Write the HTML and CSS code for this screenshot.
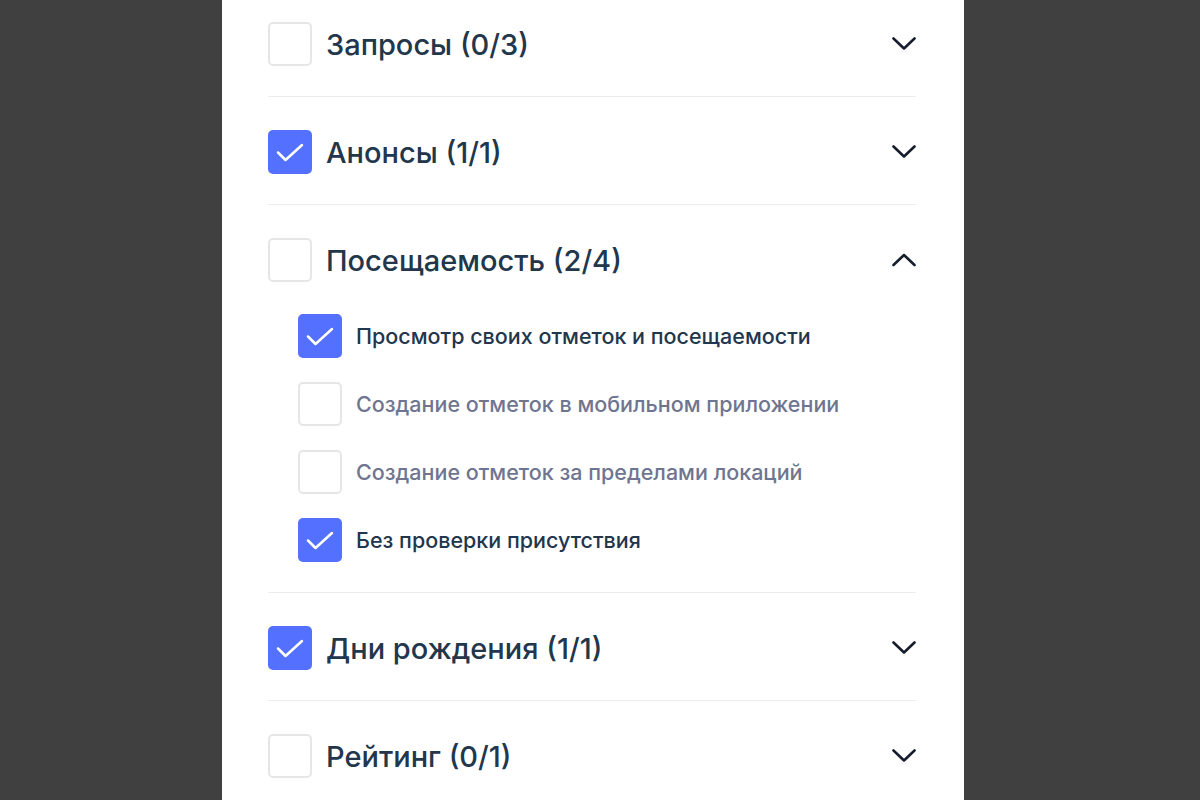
FILE: index.html
```html
<html>
    <head>
        <meta charset="utf-8">
        <link rel="stylesheet" href="styles.css">
    </head>
    <body>
        <div class="panel">

            <!-- Запросы -->
            <div class="section">
                <div class="row">
                    <span class="box"></span>
                    <span class="title">Запросы (0/3)</span>
                    <svg class="chev" width="24" height="24" viewBox="0 0 24 24"><path d="M1.5 6.5 L12 16.5 L22.5 6.5"/></svg>
                </div>
            </div>

            <!-- Анонсы -->
            <div class="section">
                <div class="row">
                    <span class="box on"><svg width="44" height="44" viewBox="0 0 44 44"><path d="M10 22.5 L17.5 30 L34 15"/></svg></span>
                    <span class="title">Анонсы (1/1)</span>
                    <svg class="chev" width="24" height="24" viewBox="0 0 24 24"><path d="M1.5 6.5 L12 16.5 L22.5 6.5"/></svg>
                </div>
            </div>

            <!-- Посещаемость -->
            <div class="section">
                <div class="row">
                    <span class="box"></span>
                    <span class="title">Посещаемость (2/4)</span>
                    <svg class="chev" width="24" height="24" viewBox="0 0 24 24"><path d="M1.5 17 L12 7 L22.5 17"/></svg>
                </div>
                <div class="items">
                    <div class="item">
                        <span class="box on"><svg width="44" height="44" viewBox="0 0 44 44"><path d="M10 22.5 L17.5 30 L34 15"/></svg></span>
                        <span class="label">Просмотр своих отметок и посещаемости</span>
                    </div>
                    <div class="item off">
                        <span class="box"></span>
                        <span class="label">Создание отметок в мобильном приложении</span>
                    </div>
                    <div class="item off">
                        <span class="box"></span>
                        <span class="label">Создание отметок за пределами локаций</span>
                    </div>
                    <div class="item">
                        <span class="box on"><svg width="44" height="44" viewBox="0 0 44 44"><path d="M10 22.5 L17.5 30 L34 15"/></svg></span>
                        <span class="label">Без проверки присутствия</span>
                    </div>
                </div>
            </div>

            <!-- Дни рождения -->
            <div class="section">
                <div class="row">
                    <span class="box on"><svg width="44" height="44" viewBox="0 0 44 44"><path d="M10 22.5 L17.5 30 L34 15"/></svg></span>
                    <span class="title">Дни рождения (1/1)</span>
                    <svg class="chev" width="24" height="24" viewBox="0 0 24 24"><path d="M1.5 6.5 L12 16.5 L22.5 6.5"/></svg>
                </div>
            </div>

            <!-- Рейтинг -->
            <div class="section">
                <div class="row">
                    <span class="box"></span>
                    <span class="title">Рейтинг (0/1)</span>
                    <svg class="chev" width="24" height="24" viewBox="0 0 24 24"><path d="M1.5 6.5 L12 16.5 L22.5 6.5"/></svg>
                </div>
            </div>

        </div>
    </body>
</html>
```

FILE: styles.css
```css
html, body {
    margin      : 0;
    padding     : 0;
    height      : 100%;
    background  : #404040;
    font-family : Inter, "Noto Sans", sans-serif;
    overflow    : hidden;
}
.panel {
    width       : 648px;
    min-height  : 100%;
    margin-left : 222px;
    padding     : 0 48px 0 46px;
    background  : #fff;
}
.section {
    padding       : 33px 0 30px;
    border-bottom : 1px solid #ececec;
}
.section:first-child {
    padding-top : 22px;
}
.section:last-child {
    border-bottom : none;
}
.row, .item {
    display     : flex;
    align-items : center;
}
.box {
    box-sizing    : border-box;
    flex          : none;
    width         : 44px;
    height        : 44px;
    border        : 2px solid #e6e6e6;
    border-radius : 5px;
    background    : #fff;
}
.box.on {
    border     : none;
    background : #5470ff;
}
.box svg {
    display : block;
}
.box svg path {
    fill            : none;
    stroke          : #fff;
    stroke-width    : 2.5;
    stroke-linecap  : round;
    stroke-linejoin : round;
}
.title {
    flex        : 1;
    margin-left : 14px;
    font-size   : 29px;
    font-weight : 500;
    color       : #22364c;
}
.chev {
    flex : none;
}
.chev path {
    fill            : none;
    stroke          : #161e2e;
    stroke-width    : 2.6;
    stroke-linecap  : round;
    stroke-linejoin : round;
}
.items {
    display        : flex;
    flex-direction : column;
    gap            : 24px;
    padding        : 32px 0 0 30px;
}
.label {
    margin-left : 14px;
    font-size   : 21.5px;
    font-weight : 500;
    color       : #22364c;
}
.item.off .label {
    color : #6f7590;
}
```
